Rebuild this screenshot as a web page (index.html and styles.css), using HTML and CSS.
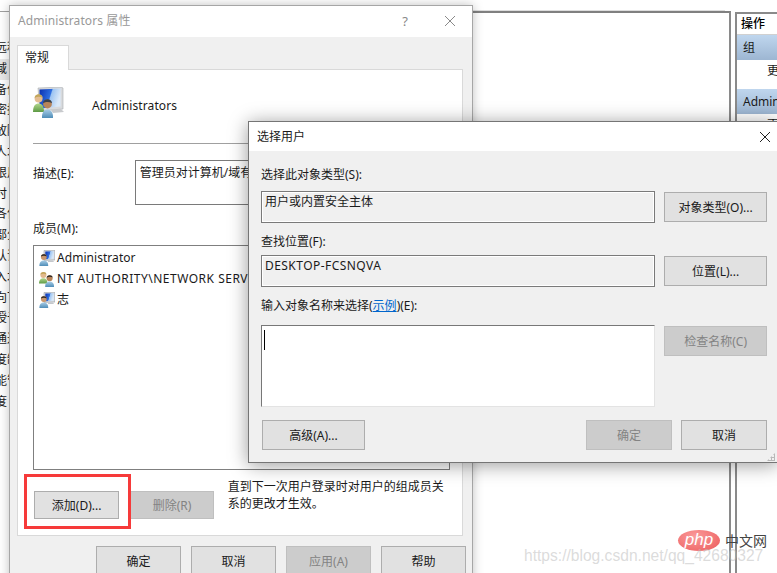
FILE: index.html
```html
<!DOCTYPE html>
<html lang="zh-CN">
<head>
    <meta charset="UTF-8">
    <meta name="viewport" content="width=device-width, initial-scale=1.0">
    <title>选择用户</title>
    <link rel="stylesheet" href="styles.css">
</head>
<body>
    <svg class="defs" width="0" height="0">
        <defs>
            <linearGradient id="screen" x1="0" y1="0" x2="1" y2="0.3">
                <stop offset="0" stop-color="#0a2fb0"/>
                <stop offset="0.55" stop-color="#2f6fe0"/>
                <stop offset="0.6" stop-color="#9cc4f2"/>
                <stop offset="1" stop-color="#dbe9f8"/>
            </linearGradient>
            <linearGradient id="shirt-blue" x1="0" y1="0" x2="0" y2="1">
                <stop offset="0" stop-color="#a9cde6"/>
                <stop offset="1" stop-color="#4f8db8"/>
            </linearGradient>
            <linearGradient id="shirt-green" x1="0" y1="0" x2="0" y2="1">
                <stop offset="0" stop-color="#b2d68c"/>
                <stop offset="1" stop-color="#5d9a45"/>
            </linearGradient>
            <symbol id="icon-user" viewBox="0 0 16 16">
                <path d="M5 0.5 L16 0 V10 L5 10.5 Z" fill="#d5d8dc" stroke="#9aa0a6" stroke-width="0.6"/>
                <path d="M6.3 1.6 L14.8 1.2 V8.8 L6.3 9.2 Z" fill="url(#screen)"/>
                <path d="M9 10.5 H14 L15 12 H9 Z" fill="#c4c7cb"/>
                <circle cx="4.8" cy="7" r="2.9" fill="#c9966b"/>
                <path d="M2 6.6 C2 3.4 7.6 3.4 7.6 6.4 C6 5.4 3.6 5.4 2 6.6 Z" fill="#2f2a26"/>
                <path d="M0.4 16 C0.2 11.8 2.4 10.4 4.8 10.4 C7.2 10.4 9.4 11.8 9.2 16 Z" fill="url(#shirt-blue)"/>
            </symbol>
            <symbol id="icon-group" viewBox="0 0 16 16">
                <circle cx="4.4" cy="4" r="3" fill="#e2b98e"/>
                <path d="M1.4 3.6 C1.6 0.2 7.2 0.2 7.4 3.4 C5.6 2.4 3.2 2.4 1.4 3.6 Z" fill="#c2a55a"/>
                <path d="M0 12.6 C0 8.6 2 7.2 4.4 7.2 C6.8 7.2 8.4 8.6 8.4 12.6 Z" fill="url(#shirt-green)"/>
                <circle cx="10.6" cy="7.2" r="3" fill="#b98458"/>
                <path d="M7.6 6.8 C7.6 3.4 13.6 3.4 13.6 6.6 C12 5.6 9.4 5.6 7.6 6.8 Z" fill="#2b2724"/>
                <path d="M6.2 16 C6 12 8.2 10.6 10.6 10.6 C13 10.6 15.2 12 15 16 Z" fill="url(#shirt-blue)"/>
            </symbol>
        </defs>
    </svg>

    <div class="desktop">
        <div class="console">
            <ul class="tree">
                <li>远程</li>
                <li class="tree-current">域</li>
                <li>备份</li>
                <li>密控</li>
                <li>故障</li>
                <li>人才</li>
                <li>限用</li>
                <li>时</li>
                <li>各位</li>
                <li>部分</li>
                <li>认证</li>
                <li>入才</li>
                <li>向下</li>
                <li>授予</li>
                <li>通过</li>
                <li>度制</li>
                <li>能管</li>
                <li>度</li>
            </ul>
            <div class="main-pane"></div>
            <div class="actions-pane">
                <div class="actions-head">操作</div>
                <div class="actions-group">组</div>
                <div class="actions-item">更多操作</div>
                <div class="actions-group">Administrators</div>
                <div class="actions-item">更多操作</div>
            </div>
        </div>

        <div class="window props">
            <div class="titlebar">
                <span class="title">Administrators 属性</span>
                <span class="help">?</span>
                <svg class="close" width="12" height="12" viewBox="0 0 12 12"><path d="M1 1 L11 11 M11 1 L1 11" stroke="#8a8a8a" fill="none"/></svg>
            </div>
            <div class="tabs"><span class="tab">常规</span></div>
            <div class="panel">
                <div class="group-head">
                    <svg class="group-icon" width="31" height="31" viewBox="0 0 31 31">
                        <path d="M5 1 L28 0 L30 1 V22 L7 24 Z" fill="#d8dadd" stroke="#a8acb0" stroke-width="0.6"/>
                        <path d="M6.5 2.4 L27.6 1.6 V19.6 L6.5 21.4 Z" fill="url(#screen)"/>
                        <path d="M18 23 L28 22 L31 25 L20 26 Z" fill="#c8cacd"/>
                        <circle cx="5.6" cy="11.5" r="4" fill="#e4bd93"/>
                        <path d="M1.6 11 C1.8 6 9.4 6 9.6 10.8 C7 9.4 4 9.4 1.6 11 Z" fill="#c2a75c"/>
                        <path d="M0 25 C0 18.5 2.6 16.5 5.6 16.5 C8.6 16.5 11 18.5 11 25 Z" fill="url(#shirt-green)"/>
                        <circle cx="14.5" cy="17" r="4.4" fill="#b98458"/>
                        <path d="M10 16.4 C10 11 19 11 19 16.2 C16.4 14.6 12.6 14.6 10 16.4 Z" fill="#39404a"/>
                        <path d="M9 31 C8.6 25 11.4 22.4 14.5 22.4 C17.6 22.4 20.4 25 20 31 Z" fill="url(#shirt-blue)"/>
                    </svg>
                    <span class="group-name">Administrators</span>
                </div>
                <div class="divider"></div>
                <div class="desc-row">
                    <span class="desc-label">描述(E):</span>
                    <div class="desc-box">管理员对计算机/域有不受限制的完全访问权</div>
                </div>
                <div class="members-label">成员(M):</div>
                <ul class="members">
                    <li><svg width="16" height="16"><use href="#icon-user"/></svg>Administrator</li>
                    <li class="member-wide"><svg width="16" height="16"><use href="#icon-group"/></svg>NT AUTHORITY\NETWORK SERVICE</li>
                    <li><svg width="16" height="16"><use href="#icon-user"/></svg>志</li>
                </ul>
                <div class="members-foot">
                    <button class="btn btn-add">添加(D)...</button>
                    <button class="btn btn-remove" disabled>删除(R)</button>
                    <p class="note">直到下一次用户登录时对用户的组成员关系的更改才生效。</p>
                </div>
            </div>
            <div class="props-foot">
                <button class="btn btn-foot">确定</button>
                <button class="btn btn-foot">取消</button>
                <button class="btn btn-foot" disabled>应用(A)</button>
                <button class="btn btn-foot">帮助</button>
            </div>
            <div class="callout"></div>
        </div>

        <div class="window picker">
            <div class="titlebar picker-bar">
                <span class="picker-title">选择用户</span>
                <svg class="close" width="12" height="12" viewBox="0 0 12 12"><path d="M1 1 L11 11 M11 1 L1 11" stroke="#222" fill="none"/></svg>
            </div>
            <div class="picker-body">
                <div class="field-label label-first">选择此对象类型(S):</div>
                <div class="field-row">
                    <div class="field">用户或内置安全主体</div>
                    <button class="btn btn-side">对象类型(O)...</button>
                </div>
                <div class="field-label">查找位置(F):</div>
                <div class="field-row row-tight">
                    <div class="field field-host">DESKTOP-FCSNQVA</div>
                    <button class="btn btn-side">位置(L)...</button>
                </div>
                <div class="field-label">输入对象名称来选择(<a class="sample">示例</a>)(E):</div>
                <div class="field-row row-names">
                    <div class="names"><span class="caret"></span></div>
                    <button class="btn btn-side" disabled>检查名称(C)</button>
                </div>
                <div class="picker-foot">
                    <button class="btn btn-side">高级(A)...</button>
                    <button class="btn btn-ok" disabled>确定</button>
                    <button class="btn btn-ok">取消</button>
                </div>
            </div>
            <div class="grip"></div>
        </div>

        <div class="logo">
            <span class="logo-php">php</span>
            <span class="logo-cn">中文网</span>
        </div>
        <div class="watermark">https://blog.csdn.net/qq_42680327</div>
    </div>
</body>
</html>
```

FILE: styles.css
```css
* {
    margin: 0;
    padding: 0;
    box-sizing: border-box;
}

html, body {
    width: 777px;
    height: 573px;
    overflow: hidden;
    background: #fff;
}

body {
    font-family: "Noto Sans", "Noto Sans CJK SC", sans-serif;
    font-size: 12px;
    line-height: 16px;
    color: #1a1a1a;
}

.defs {
    position: absolute;
}

ul {
    list-style: none;
}

.desktop {
    position: relative;
    width: 777px;
    height: 573px;
    overflow: hidden;
}

/* console behind the dialogs */
.console {
    display: flex;
    height: 573px;
    padding-top: 4px;
    border-top: 0;
}

.tree {
    width: 9px;
    margin-top: 7px;
    padding-top: 26px;
    overflow: hidden;
    border-top: 1px solid #a0a0a0;
    flex-shrink: 0;
}

.tree li {
    height: 20.8px;
    line-height: 20.8px;
    margin-left: -5px;
    white-space: nowrap;
}

.tree-current {
    background: #e8e8e8;
}

.main-pane {
    flex: 1;
    margin-top: 7px;
    border-top: 2px solid #808080;
    border-right: 2px solid #8a8a8a;
    box-shadow: 0 -7px 0 -6px #ddd;
}

.actions-pane {
    width: 42px;
    margin-left: 4px;
    margin-top: 8px;
    border-top: 2px solid #8a8a8a;
    border-left: 2px solid #8a8a8a;
    overflow: hidden;
    white-space: nowrap;
}

.actions-head {
    height: 21px;
    padding-left: 4px;
    line-height: 20px;
    font-weight: 500;
    color: #000;
    border-bottom: 1px solid #d0d0d0;
}

.actions-group {
    height: 25px;
    padding-left: 6px;
    line-height: 25px;
    background: linear-gradient(#bfd6ee, #9db6d2);
}

.actions-item {
    height: 29px;
    padding-left: 30px;
    line-height: 22px;
}

/* dialog windows */
.window {
    position: absolute;
    background: #f0f0f0;
}

.titlebar {
    display: flex;
    align-items: center;
    height: 31px;
    padding-left: 8px;
    padding-bottom: 2px;
    background: #fff;
}

.title {
    color: #999;
    flex: 1;
    letter-spacing: 0.1px;
}

.props {
    left: 9px;
    top: 5px;
    width: 464px;
    height: 600px;
    border: 1px solid #a6a6a6;
    border-bottom: 0;
    box-shadow: 0 0 10px rgba(0, 0, 0, 0.25);
}

.help {
    color: #888;
    font-size: 13px;
    margin-right: 36px;
}

.props .close {
    margin-right: 16px;
}

.tabs {
    display: flex;
    height: 33px;
    padding: 8px 0 0 7px;
}

.tab {
    width: 52px;
    height: 25px;
    padding: 4px 0 0 7px;
    background: #fff;
    border: 1px solid #d9d9d9;
    border-bottom: 0;
    position: relative;
    z-index: 1;
}

.panel {
    width: 446px;
    height: 467px;
    margin-left: 7px;
    margin-top: -1px;
    padding: 0 14px 0 15px;
    background: #fff;
    border: 1px solid #d9d9d9;
}

.group-head {
    display: flex;
    align-items: center;
    gap: 28px;
    margin-top: 17px;
    height: 31px;
}

.group-name {
    padding-top: 6px;
    letter-spacing: 0.1px;
}

.divider {
    margin-top: 25px;
    height: 1px;
    background: #a0a0a0;
}

.desc-row {
    display: flex;
    margin-top: 16px;
}

.desc-label {
    width: 102px;
    margin-top: 6px;
}

.desc-box {
    width: 314px;
    height: 45px;
    padding: 4px 4px;
    border: 1px solid #7a7a7a;
    white-space: nowrap;
    overflow: hidden;
}

.members-label {
    margin-top: 16px;
}

.members {
    width: 417px;
    height: 225px;
    margin-top: 8px;
    padding: 1px 5px;
    border: 1px solid #7f7f7f;
    letter-spacing: 0.05px;
    overflow: hidden;
}

.members li {
    display: flex;
    align-items: center;
    gap: 2px;
    height: 21px;
    white-space: nowrap;
}

.members .member-wide {
    letter-spacing: 0.5px;
}

.members-foot {
    display: flex;
    align-items: flex-start;
    margin-top: 8px;
}

.note {
    width: 222px;
    margin-left: 14px;
    line-height: 17px;
}

.btn {
    height: 30px;
    font-family: inherit;
    font-size: 12px;
    color: #1a1a1a;
    background: #e1e1e1;
    border: 1px solid #adadad;
}

.btn:disabled {
    color: #838383;
    background: #ccc;
    border-color: #bfbfbf;
}

.btn-add {
    width: 86px;
    height: 28px;
    margin-top: 13px;
    margin-left: 1px;
}

.btn-remove {
    width: 84px;
    height: 28px;
    margin-top: 13px;
    margin-left: 11px;
}

.props-foot {
    display: flex;
    gap: 10px;
    margin-top: 10px;
    padding-left: 86px;
}

.btn-foot {
    width: 85px;
}

.callout {
    position: absolute;
    left: 14px;
    top: 468px;
    width: 107px;
    height: 55px;
    border: 3px solid #f63a3a;
}

.picker {
    left: 248px;
    top: 121px;
    width: 530px;
    height: 342px;
    border: 1px solid #757575;
    box-shadow: 0 2px 18px rgba(0, 0, 0, 0.4);
}

.picker-bar {
    height: 29px;
    padding-bottom: 0;
}

.picker-title {
    flex: 1;
}

.picker .close {
    margin-right: 6px;
}

.picker-body {
    padding: 0 10px 0 12px;
}

.field-label {
    margin-top: 11px;
}

.label-first {
    margin-top: 16px;
}

.field-row {
    display: flex;
    gap: 9px;
    margin-top: 8px;
}

.row-tight {
    margin-top: 5px;
}

.row-names {
    margin-top: 11px;
}

.field {
    width: 395px;
    height: 32px;
    padding: 2px 3px;
    border: 1px solid #7a7a7a;
    box-shadow: inset 0 0 0 1px #fff;
}

.field-host {
    letter-spacing: 0.45px;
}

.names {
    width: 395px;
    height: 82px;
    padding: 4px 2px;
    background: #fff;
    border: 1px solid #e3e3e3;
    border-top-color: #777;
    border-left-color: #777;
}

.caret {
    display: block;
    width: 1px;
    height: 20px;
    background: #000;
}

.sample {
    color: #0066cc;
    text-decoration: underline;
}

.btn-side {
    width: 103px;
    margin-top: 1px;
}

.picker-foot {
    display: flex;
    gap: 9px;
    margin-top: 12px;
    padding-left: 1px;
}

.btn-ok {
    width: 86px;
    margin-top: 1px;
}

.picker-foot .btn-ok:nth-child(2) {
    margin-left: auto;
}

.grip {
    position: absolute;
    right: 2px;
    bottom: 1px;
    width: 8px;
    height: 8px;
    background: radial-gradient(circle, #b8b8b8 1px, transparent 1.2px) 0 0 / 3px 3px;
    clip-path: polygon(100% 0, 100% 100%, 0 100%);
}

/* site marks stamped over the shot */
.logo {
    position: absolute;
    left: 678px;
    top: 530px;
    display: flex;
    align-items: center;
    gap: 5px;
}

.logo-php {
    width: 42px;
    height: 21px;
    border-radius: 50%;
    background: radial-gradient(ellipse at 40% 30%, #fa9a9a, #ec5a5a);
    color: #fff;
    font-family: "Liberation Sans", sans-serif;
    font-size: 17px;
    font-style: italic;
    line-height: 19px;
    text-align: center;
}

.logo-cn {
    margin-top: 1px;
    font-size: 14px;
    color: #444;
}

.watermark {
    position: absolute;
    left: 524px;
    top: 545px;
    font-family: "Liberation Sans", sans-serif;
    font-size: 15.6px;
    line-height: 22px;
    color: rgba(190, 190, 190, 0.55);
    white-space: nowrap;
}
```
